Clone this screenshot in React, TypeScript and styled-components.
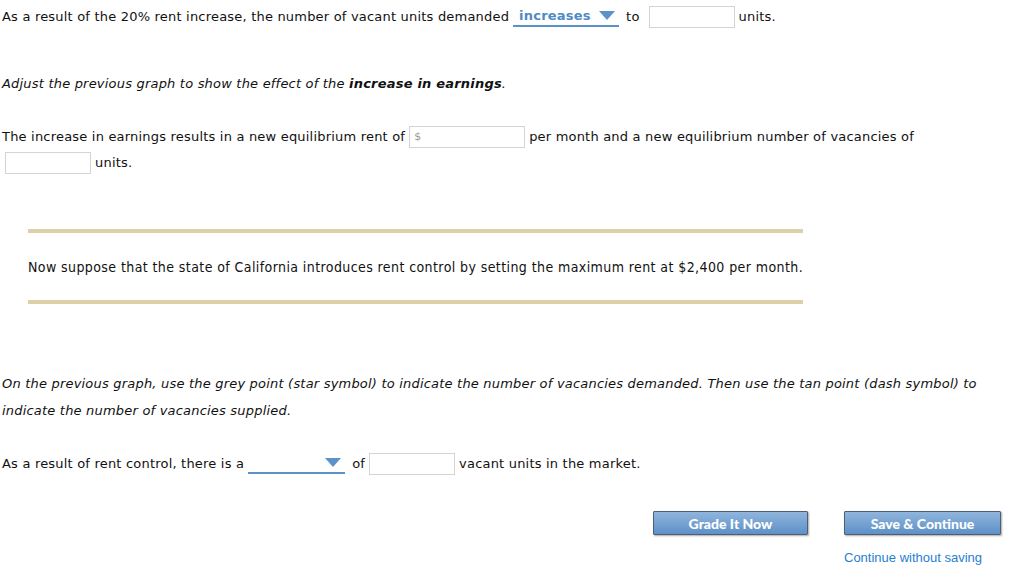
import React from "react";
import styled, { createGlobalStyle } from "styled-components";

const Global = createGlobalStyle`
  html, body { margin: 0; padding: 0; background: #fff; }
  body { font-family: "DejaVu Sans", Verdana, sans-serif; font-size: 13px; color: #111; letter-spacing: 0.2px; }
`;

const Page = styled.div`
  width: 1024px;
  height: 576px;
  box-sizing: border-box;
  padding: 4px 23px 0 2px;
  overflow: hidden;
`;

const Para = styled.div<{ $top: number; $lh?: number; $italic?: boolean }>`
  margin-top: ${(p) => p.$top}px;
  line-height: ${(p) => p.$lh ?? 26}px;
  font-style: ${(p) => (p.$italic ? "italic" : "normal")};
  white-space: nowrap;
`;

const Input = styled.span<{ $w: number; $ml?: number }>`
  display: inline-block;
  box-sizing: border-box;
  width: ${(p) => p.$w}px;
  height: 22px;
  border: 1px solid #d4d4d4;
  background: #fff;
  vertical-align: middle;
  margin: 0 4px 0 ${(p) => p.$ml ?? 4}px;
  position: relative;
  top: -1px;
  font-size: 11px;
  line-height: 20px;
  letter-spacing: 0;
  color: #9a9a9a;
  padding-left: 4px;
`;

const Select = styled.span<{ $w: number }>`
  display: inline-flex;
  align-items: center;
  justify-content: space-between;
  box-sizing: border-box;
  width: ${(p) => p.$w}px;
  height: 20px;
  border-bottom: 2px solid #5b93c9;
  vertical-align: middle;
  margin: 0 7px 0 4px;
  padding: 0 4px 0 6px;
  position: relative;
  top: -1px;
  font-weight: bold;
  color: #4f8ac6;
`;

const Arrow = styled.span`
  width: 0;
  height: 0;
  border-left: 8px solid transparent;
  border-right: 8px solid transparent;
  border-top: 9px solid #5b93c9;
`;

const Callout = styled.div`
  margin: 53px 0 0 26px;
  width: 775px;
`;

const Bar = styled.div`
  height: 4px;
  background: #dcd0a6;
`;

const CalloutText = styled.div`
  line-height: 26px;
  margin: 21px 0 20px;
  font-size: 14px;
  font-family: "DejaVu Sans Condensed", "DejaVu Sans", sans-serif;
  font-stretch: condensed;
  letter-spacing: 0.41px;
  white-space: nowrap;
`;

const Actions = styled.div`
  margin-top: 34px;
  display: flex;
  justify-content: flex-end;
  gap: 36px;
`;

const Col = styled.div`
  display: flex;
  flex-direction: column;
  align-items: flex-start;
`;

const Button = styled.button<{ $w: number }>`
  width: ${(p) => p.$w}px;
  height: 24px;
  box-sizing: border-box;
  border: 1px solid #4f5f73;
  border-radius: 1px;
  background: linear-gradient(#90b5dd, #5d91c7);
  box-shadow: 1px 1px 2px rgba(0, 0, 0, 0.35);
  color: #fff;
  font-family: Lato, "Open Sans", sans-serif;
  font-weight: 900;
  font-size: 14px;
  letter-spacing: 0;
  padding: 0;
  cursor: pointer;
`;

const Link = styled.a`
  margin-top: 15px;
  font-family: "Liberation Sans", Arial, sans-serif;
  font-size: 13px;
  letter-spacing: 0;
  color: #1f7fd3;
  text-decoration: none;
`;

export default function App() {
  return (
    <>
      <Global />
      <Page>
        <Para $top={0}>
          As a result of the 20% rent increase, the number of vacant units demanded
          <Select $w={106}>
            increases <Arrow />
          </Select>
          to
          <Input $w={86} $ml={9} />
          units.
        </Para>
        <Para $top={41} $italic>
          Adjust the previous graph to show the effect of the <b>increase in earnings</b>.
        </Para>
        <Para $top={27}>
          The increase in earnings results in a new equilibrium rent of
          <Input $w={116}>$</Input>
          per month and a new equilibrium number of vacancies of
          <br />
          <Input $w={86} $ml={3} />
          units.
        </Para>
        <Callout>
          <Bar />
          <CalloutText>
            Now suppose that the state of California introduces rent control by setting the maximum rent at $2,400 per month.
          </CalloutText>
          <Bar />
        </Callout>
        <Para $top={66} $lh={27} $italic>
          On the previous graph, use the grey point (star symbol) to indicate the number of vacancies demanded. Then use the tan point (dash symbol) to
          <br />
          indicate the number of vacancies supplied.
        </Para>
        <Para $top={27}>
          As a result of rent control, there is a
          <Select $w={97}>
            <span />
            <Arrow />
          </Select>
          of
          <Input $w={86} />
          vacant units in the market.
        </Para>
        <Actions>
          <Button $w={155}>Grade It Now</Button>
          <Col>
            <Button $w={157}>Save &amp; Continue</Button>
            <Link href="#">Continue without saving</Link>
          </Col>
        </Actions>
      </Page>
    </>
  );
}
